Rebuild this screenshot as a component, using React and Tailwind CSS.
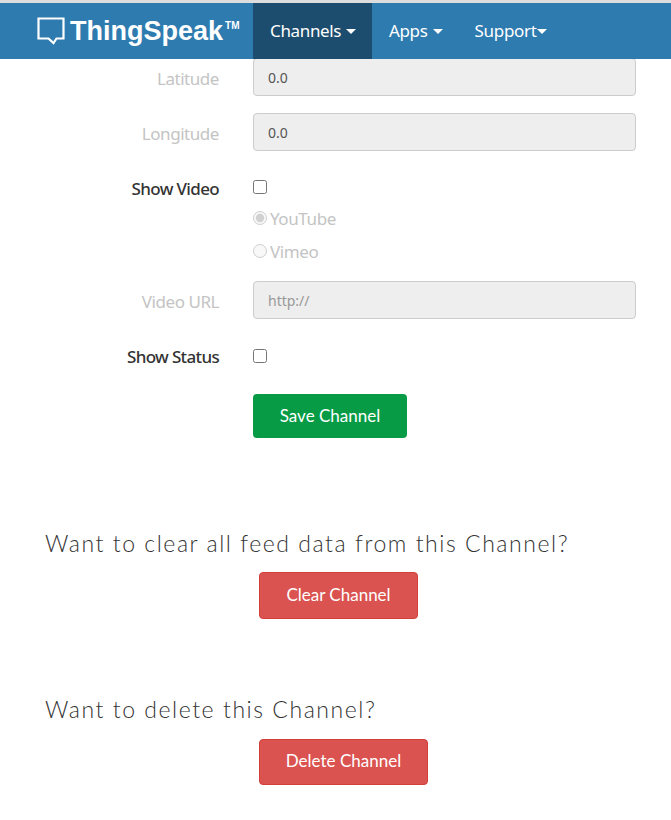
import React from 'react';

const labelFont = "font-['Noto_Sans',sans-serif]";
const raleway = "font-['Lato',sans-serif]";

function Logo() {
  return (
    <svg width="28" height="29" viewBox="0 0 28 29" fill="none" className="shrink-0">
      <path d="M1.5 1.5H26.5V21.5H19.5L16.5 26L11.5 21.5H1.5Z" stroke="#fff" strokeWidth="2.2" />
    </svg>
  );
}

function Caret({ className = 'ml-[5px]' }) {
  return <span className={`inline-block border-t-[5px] border-x-[5px] border-x-transparent border-t-white ${className}`} />;
}

function TextRow({ label, value, muted, className = '' }) {
  return (
    <div className={`flex items-center ${className}`}>
      <label className={`w-[219px] pt-[4px] text-right text-[17px] tracking-[-0.45px] text-[#c4c4c4] ${labelFont}`}>{label}</label>
      <div className={`ml-[34px] w-[383px] h-[38px] flex items-center pl-[14px] bg-[#eeeeee] border border-[#cccccc] rounded text-[14px] ${muted ? 'text-[#999]' : 'text-[#555]'} ${labelFont}`}>
        {value}
      </div>
    </div>
  );
}

function CheckRow({ label, labelTop = 'mt-[2px]', className = '' }) {
  return (
    <div className={`flex items-start h-[24px] ${className}`}>
      <label className={`w-[219px] text-right text-[17px] leading-[24px] font-medium tracking-[-0.65px] text-[#333] ${labelFont} ${labelTop}`}>{label}</label>
      <input type="checkbox" readOnly className="ml-[34px] mt-[5px] w-[14px] h-[14px]" />
    </div>
  );
}

function RadioRow({ label, checked, className = '' }) {
  return (
    <div className={`flex items-start h-[24px] pl-[253px] ${className}`}>
      <input type="radio" disabled defaultChecked={checked} className="mt-[4px] w-[14px] h-[14px]" />
      <span className={`ml-[3px] text-[17px] leading-[24px] tracking-[-0.4px] text-[#c4c4c4] ${labelFont}`}>{label}</span>
    </div>
  );
}

export default function App() {
  return (
    <div className={`w-[671px] h-[820px] bg-white overflow-hidden ${labelFont}`}>
      <div className="h-[3px] bg-[#dddddd]" />
      <nav className="relative z-10 h-[56px] bg-[#2e7bb0] flex text-white">
        <div className="w-[253px] flex items-center pl-[37px] gap-[5px]">
          <Logo />
          <span className="font-['Liberation_Sans',sans-serif] font-bold text-[27px] leading-none">ThingSpeak</span>
          <span className="font-['Liberation_Sans',sans-serif] font-bold text-[10px] -ml-[3px] -mt-[12px]">TM</span>
        </div>
        <div className="w-[119px] bg-[#1c4c6e] flex items-center pl-[17px] text-[17px] tracking-[-0.35px]">
          Channels <Caret />
        </div>
        <div className="flex items-center pl-[17px] text-[17px] tracking-[-0.35px]">
          Apps <Caret />
        </div>
        <div className="flex items-center pl-[32px] text-[17px] tracking-[-0.3px]">
          Support<Caret className="ml-0" />
        </div>
      </nav>

      <TextRow label="Latitude" value="0.0" className="-mt-[1px]" />
      <TextRow label="Longitude" value="0.0" className="mt-[17px]" />
      <CheckRow label="Show Video" className="mt-[24px]" />
      <RadioRow label="YouTube" checked className="mt-[8px]" />
      <RadioRow label="Vimeo" className="mt-[9px]" />
      <TextRow label="Video URL" value="http://" muted className="mt-[17px]" />
      <CheckRow label="Show Status" labelTop="mt-[1px]" className="mt-[25px]" />

      <div className="pl-[253px] mt-[26px]">
        <button className={`w-[154px] h-[44px] bg-[#079b46] rounded text-white text-[17px] ${raleway}`}>Save Channel</button>
      </div>

      <h3 className={`ml-[45px] mt-[91px] text-[23px] leading-[28px] font-light tracking-[1.55px] text-[#333] ${raleway}`}>
        Want to clear all feed data from this Channel?
      </h3>
      <div className="pl-[259px] mt-[15px]">
        <button className={`w-[159px] h-[47px] pb-[2px] bg-[#da5350] border border-[#d43f3a] rounded text-white text-[17px] ${raleway}`}>Clear Channel</button>
      </div>

      <h3 className={`ml-[45px] mt-[76px] text-[23px] leading-[28px] font-light tracking-[1.55px] text-[#333] ${raleway}`}>
        Want to delete this Channel?
      </h3>
      <div className="pl-[259px] mt-[16px]">
        <button className={`w-[169px] h-[46px] pb-[2px] bg-[#da5350] border border-[#d43f3a] rounded text-white text-[17px] ${raleway}`}>Delete Channel</button>
      </div>
    </div>
  );
}
